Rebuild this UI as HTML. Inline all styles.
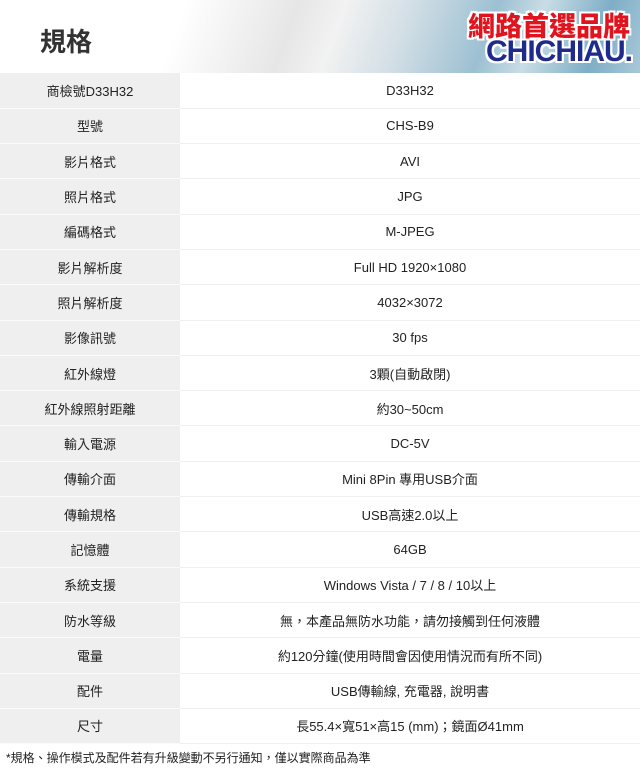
<!DOCTYPE html>
<html><head><meta charset="utf-8"><style>
*{margin:0;padding:0;box-sizing:border-box}
body{width:640px;height:768px;background:#fff;font-family:"Liberation Sans","Noto Sans CJK TC",sans-serif;color:#333;overflow:hidden;position:relative}
.hdr{position:absolute;left:0;top:0;width:640px;height:73px;background:linear-gradient(110deg,#fff 0%,#fff 28%,#e6e6e6 45%,#f2f2f2 52%,#d3dfe6 62%,#9cc0d2 75%,#c9dde6 82%,#7eaec6 92%,#a9c8d8 100%);}
.title{position:absolute;left:40px;top:22px;font-size:26px;font-weight:bold;color:#333}
.l1{position:absolute;right:10px;top:5px;font-size:27px;font-weight:900;color:#e0141e;text-shadow:2px 0 #fff,-2px 0 #fff,0 2px #fff,0 -2px #fff,2px 2px #fff,-2px -2px #fff,2px -2px #fff,-2px 2px #fff}
.l2{position:absolute;right:8px;top:35px;font-size:30px;font-weight:900;color:#1e2a8c;letter-spacing:-1px;text-shadow:2px 0 #fff,-2px 0 #fff,0 2px #fff,0 -2px #fff,2px 2px #fff,-2px -2px #fff,2px -2px #fff,-2px 2px #fff}
table{position:absolute;left:0;top:73px;width:640px;border-collapse:collapse}
td{height:35.3px;font-size:13px;text-align:center;border-bottom:1px solid #f0f0f0;padding:0;color:#222}
td.k{width:180px;background:#efefef;border-bottom:1px solid #fafafa}
.note{position:absolute;left:6px;top:749px;font-size:12px;color:#222}
</style></head><body>
<div class="hdr"></div>
<div class="title">規格</div>
<div class="l1">網路首選品牌</div>
<div class="l2">CHICHIAU.</div>
<table>
<tr><td class="k">商檢號D33H32</td><td>D33H32</td></tr>
<tr><td class="k">型號</td><td>CHS-B9</td></tr>
<tr><td class="k">影片格式</td><td>AVI</td></tr>
<tr><td class="k">照片格式</td><td>JPG</td></tr>
<tr><td class="k">編碼格式</td><td>M-JPEG</td></tr>
<tr><td class="k">影片解析度</td><td>Full HD 1920×1080</td></tr>
<tr><td class="k">照片解析度</td><td>4032×3072</td></tr>
<tr><td class="k">影像訊號</td><td>30 fps</td></tr>
<tr><td class="k">紅外線燈</td><td>3顆(自動啟閉)</td></tr>
<tr><td class="k">紅外線照射距離</td><td>約30~50cm</td></tr>
<tr><td class="k">輸入電源</td><td>DC-5V</td></tr>
<tr><td class="k">傳輸介面</td><td>Mini 8Pin 專用USB介面</td></tr>
<tr><td class="k">傳輸規格</td><td>USB高速2.0以上</td></tr>
<tr><td class="k">記憶體</td><td>64GB</td></tr>
<tr><td class="k">系統支援</td><td>Windows Vista / 7 / 8 / 10以上</td></tr>
<tr><td class="k">防水等級</td><td>無，本產品無防水功能，請勿接觸到任何液體</td></tr>
<tr><td class="k">電量</td><td>約120分鐘(使用時間會因使用情況而有所不同)</td></tr>
<tr><td class="k">配件</td><td>USB傳輸線, 充電器, 說明書</td></tr>
<tr><td class="k">尺寸</td><td>長55.4×寬51×高15 (mm)；鏡面Ø41mm</td></tr>
</table>
<div class="note">*規格、操作模式及配件若有升級變動不另行通知，僅以實際商品為準</div>
</body></html>
